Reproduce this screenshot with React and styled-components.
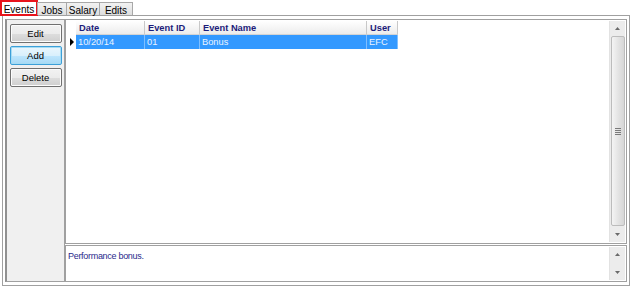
import React from "react";
import styled, { createGlobalStyle, css } from "styled-components";

const Global = createGlobalStyle`
  html, body { margin: 0; padding: 0; background: #ffffff; }
  body { font-family: "Liberation Sans", Arial, sans-serif; font-size: 11px; }
`;

const Root = styled.div`
  width: 632px;
  height: 288px;
  display: flex;
  flex-direction: column;
  background: #ffffff;
  overflow: hidden;
`;

const TabStrip = styled.div`
  display: flex;
  align-items: flex-end;
  height: 16px;
  position: relative;
  z-index: 1;
`;

const Tab = styled.div`
  box-sizing: border-box;
  display: flex;
  align-items: center;
  justify-content: center;
  width: ${(p) => p.$w}px;
  font-size: 10px;
  color: #000;
  ${(p) =>
    p.$active
      ? css`
          height: 16px;
          background: #ffffff;
          border: 2px solid #e8141c;
          padding-top: 2px;
        `
      : css`
          height: 13px;
          margin-bottom: 1px;
          background: linear-gradient(#f2f2f2, #dedede);
          border: 1px solid #a8a8a8;
          border-bottom: none;
          margin-left: -1px;
          padding-top: 2px;
        `}
`;

const Panel = styled.div`
  box-sizing: border-box;
  flex: none;
  height: 271px;
  margin: -1px 2px 0 2px;
  border: 1px solid #a0a0a0;
  box-shadow: inset 0 0 0 1px #ffffff;
  background: #ffffff;
  padding: 3px 2px 3px 2px;
  display: flex;
`;

const SidePanel = styled.div`
  box-sizing: border-box;
  width: 60px;
  background: #f0f0f0;
  border: 1px solid #a0a0a0;
  border-left: 2px solid #909090;
  display: flex;
  flex-direction: column;
  align-items: center;
  gap: 3px;
  padding-top: 4px;
`;

const Button = styled.div`
  box-sizing: border-box;
  width: 52px;
  height: 19px;
  display: flex;
  align-items: center;
  justify-content: center;
  font-size: 9.5px;
  color: #000;
  border-radius: 2px;
  ${(p) =>
    p.$focused
      ? css`
          border: 1px solid #3c9fd8;
          background: linear-gradient(#eaf6fd 0%, #d9f0fc 50%, #bee6fd 51%, #a7d9f5 100%);
          box-shadow: inset 0 0 0 1px #a6dcf3;
        `
      : css`
          border: 1px solid #707070;
          background: linear-gradient(#f2f2f2 0%, #ebebeb 50%, #dddddd 51%, #cfcfcf 100%);
          box-shadow: inset 0 0 0 1px #fcfcfc;
        `}
`;

const Main = styled.div`
  flex: 1;
  display: flex;
  flex-direction: column;
  gap: 1px;
`;

const GridBox = styled.div`
  box-sizing: border-box;
  flex: 1;
  border: 1px solid #a0a0a0;
  display: flex;
  background: #ffffff;
`;

const GridArea = styled.div`
  flex: 1;
  padding: 1px 0 0 1px;
`;

const Table = styled.div`
  display: grid;
  grid-template-columns: 9px 69px 55px 167px 31px;
  width: max-content;
`;

const HeadCell = styled.div`
  box-sizing: border-box;
  height: 14px;
  padding-left: 3px;
  font-size: 9.3px;
  font-weight: bold;
  color: #1c1c7a;
  line-height: 14px;
  background: ${(p) => (p.$blank ? "#ffffff" : "linear-gradient(#ffffff, #ececec)")};
  border-right: ${(p) => (p.$blank ? "none" : "1px solid #c8c8c8")};
  border-bottom: ${(p) => (p.$blank ? "none" : "1px solid #d4d4d4")};
`;

const RowHeader = styled.div`
  box-sizing: border-box;
  height: 14px;
  display: flex;
  align-items: center;
  justify-content: center;
  background: #ffffff;
`;

const Cell = styled.div`
  box-sizing: border-box;
  height: 14px;
  padding-left: 2px;
  font-size: 9.3px;
  line-height: 14px;
  color: #eaf3ff;
  background: #3399ff;
  border-right: 1px solid #7fbfff;
`;

const ScrollBar = styled.div`
  box-sizing: border-box;
  width: 16px;
  margin: 1px 1px 1px 0;
  background: #ececec;
  border-left: 1px solid #e2e2e2;
  display: flex;
  flex-direction: column;
  align-items: center;
`;

const Arrow = styled.div`
  height: 15px;
  width: 15px;
  display: flex;
  align-items: center;
  justify-content: center;
  flex: none;
`;

const Thumb = styled.div`
  box-sizing: border-box;
  flex: 1;
  width: 14px;
  margin: 0 0 1px;
  border: 1px solid #bcbcbc;
  border-radius: 2px;
  background: linear-gradient(90deg, #f4f4f4, #e4e4e4 50%, #d6d6d6);
  display: flex;
  align-items: center;
  justify-content: center;
`;

const Track = styled.div`
  flex: 1;
`;

const MemoBox = styled.div`
  box-sizing: border-box;
  height: 37px;
  border: 1px solid #a0a0a0;
  display: flex;
  background: #ffffff;
`;

const MemoText = styled.div`
  flex: 1;
  padding: 5px 0 0 2px;
  font-size: 9px;
  letter-spacing: -0.3px;
  color: #2a2a8c;
`;

const UpIcon = () => (
  <svg width="5" height="3" viewBox="0 0 5 3">
    <path d="M0 3 L2.5 0 L5 3 Z" fill="#6a6a6a" />
  </svg>
);
const DownIcon = () => (
  <svg width="5" height="3" viewBox="0 0 5 3">
    <path d="M0 0 L5 0 L2.5 3 Z" fill="#6a6a6a" />
  </svg>
);
const Grip = () => (
  <svg width="6" height="7" viewBox="0 0 6 7">
    <path d="M0 0.5H6M0 2.5H6M0 4.5H6M0 6.5H6" stroke="#7a7a7a" strokeWidth="1" />
  </svg>
);
const RowPointer = () => (
  <svg width="4" height="8" viewBox="0 0 4 8">
    <path d="M0 0 L4 4 L0 8 Z" fill="#000" />
  </svg>
);

const headers = ["Date", "Event ID", "Event Name", "User"];
const row = ["10/20/14", "01", "Bonus", "EFC"];

export default function App() {
  return (
    <Root>
      <Global />
      <TabStrip>
        <Tab $active $w={38}>Events</Tab>
        <Tab $w={30}>Jobs</Tab>
        <Tab $w={34}>Salary</Tab>
        <Tab $w={34}>Edits</Tab>
      </TabStrip>
      <Panel>
        <SidePanel>
          <Button>Edit</Button>
          <Button $focused>Add</Button>
          <Button>Delete</Button>
        </SidePanel>
        <Main>
          <GridBox>
            <GridArea>
              <Table>
                <HeadCell $blank />
                {headers.map((h) => (
                  <HeadCell key={h}>{h}</HeadCell>
                ))}
                <RowHeader>
                  <RowPointer />
                </RowHeader>
                {row.map((c, i) => (
                  <Cell key={i}>{c}</Cell>
                ))}
              </Table>
            </GridArea>
            <ScrollBar>
              <Arrow><UpIcon /></Arrow>
              <Thumb><Grip /></Thumb>
              <Arrow><DownIcon /></Arrow>
            </ScrollBar>
          </GridBox>
          <MemoBox>
            <MemoText>Performance bonus.</MemoText>
            <ScrollBar>
              <Arrow><UpIcon /></Arrow>
              <Track />
              <Arrow><DownIcon /></Arrow>
            </ScrollBar>
          </MemoBox>
        </Main>
      </Panel>
    </Root>
  );
}
